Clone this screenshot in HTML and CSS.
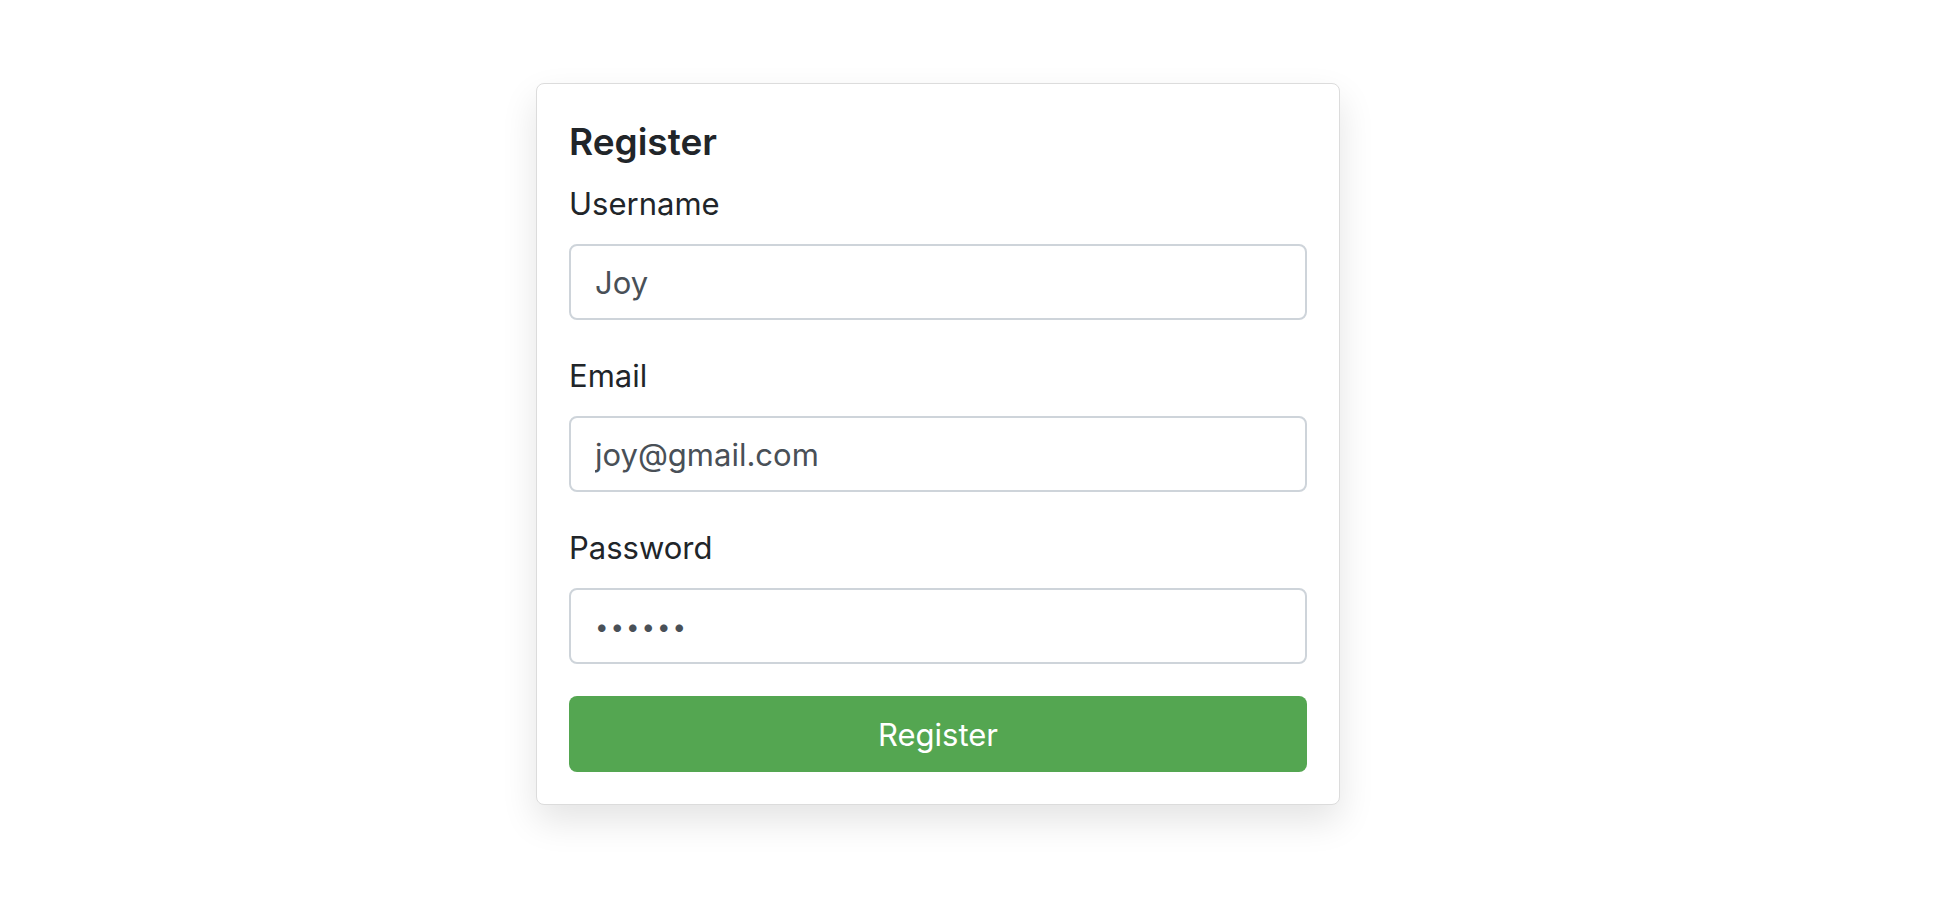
FILE: index.html
```html
<!DOCTYPE html>
<html lang="en">
<head>
<meta charset="utf-8">
<title>Register</title>
<link rel="stylesheet" href="styles.css">
</head>
<body>
<div class="page">
  <form class="card">
    <h4 class="card-title">Register</h4>
    <div class="form-group">
      <label class="form-label" for="username">Username</label>
      <input class="form-control" id="username" type="text" value="Joy">
    </div>
    <div class="form-group">
      <label class="form-label" for="email">Email</label>
      <input class="form-control" id="email" type="email" value="joy@gmail.com">
    </div>
    <div class="form-group">
      <label class="form-label" for="password">Password</label>
      <input class="form-control form-password" id="password" type="password" value="123456">
    </div>
    <button class="btn-register" type="button">Register</button>
  </form>
</div>
</body>
</html>
```

FILE: styles.css
```css
* { box-sizing: border-box; }
html, body { margin: 0; padding: 0; background: #fff; }
body {
  font-family: Inter, "Noto Sans", "Liberation Sans", sans-serif;
  color: #212529;
}
.page {
  display: flex;
  justify-content: center;
  align-items: flex-start;
  min-height: 100vh;
  padding: 83px 58px 0 0;
}
.card {
  width: 804px;
  display: flex;
  flex-direction: column;
  padding: 36px 32px 32px;
  background: #fff;
  border: 1px solid #dcdcdc;
  border-radius: 8px;
  box-shadow: 0 16px 36px rgba(0,0,0,0.11);
}
.card-title {
  margin: 0 0 17px;
  font-size: 37px;
  line-height: 43px;
  font-weight: 600;
  color: #212529;
}
.form-group {
  display: flex;
  flex-direction: column;
  margin-bottom: 32px;
}
.form-label {
  font-size: 31px;
  line-height: 48px;
  margin-bottom: 16px;
  color: #212529;
}
.form-control {
  height: 76px;
  padding: 0 24px;
  font-family: inherit;
  font-size: 31px;
  color: #495057;
  background: #fff;
  border: 2px solid #ced4da;
  border-radius: 8px;
  outline: none;
}
.form-password {
  font-size: 24px;
  letter-spacing: 2px;
}
.btn-register {
  height: 76px;
  border: none;
  border-radius: 8px;
  background: #54a651;
  color: #fff;
  font-family: inherit;
  font-size: 31px;
}
```
